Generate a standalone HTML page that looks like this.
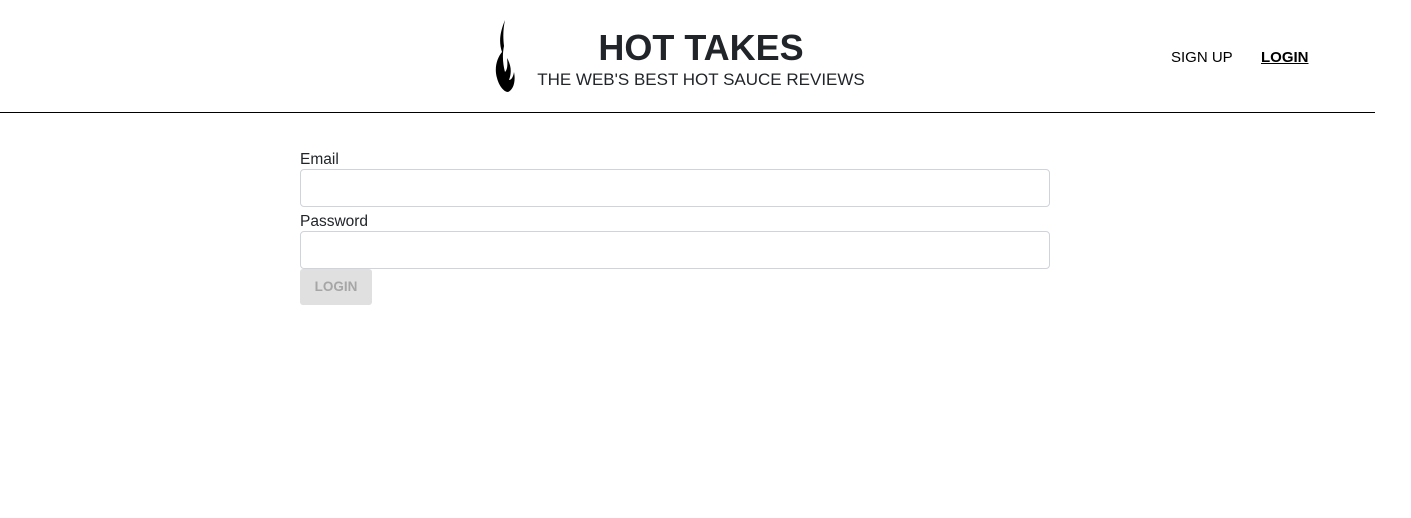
<!DOCTYPE html>
<html><head><style>
body{margin:0;background:#fff;font-family:"Liberation Sans",sans-serif;color:#212529;width:1411px;height:518px;overflow:hidden;position:relative}
.hdr{position:absolute;left:0;top:0;width:1375px;height:112px;border-bottom:1px solid #000}
.t1{position:absolute;left:500px;width:402px;text-align:center;top:27px;font-size:36px;font-weight:bold;color:#212529;white-space:nowrap}
.t2{position:absolute;left:500px;width:402px;text-align:center;top:70px;font-size:17px;color:#212529;white-space:nowrap}
.nav{position:absolute;top:49px;font-size:15px;color:#000}
label{position:absolute;left:300px;font-size:15.5px;color:#212529}
.in{position:absolute;left:300px;width:748px;height:36px;border:1px solid #ced4da;border-radius:4px}
.btn{position:absolute;left:300px;top:269px;width:72px;height:36px;background:#e0e0e0;border-radius:3px;color:#a6a6a6;font-size:13.5px;font-weight:bold;text-align:center;line-height:36px}
</style></head><body>
<div class="hdr">
<svg style="position:absolute;left:494px;top:20px" width="22" height="73" viewBox="0 0 22 73">
<path d="M11 0 C7 10 4 20 8 32 C3 38 0 48 3 58 C5 66 10 72 14 72 C19 70 22 62 20 52 C19 58 17 60 15 60 C18 52 17 45 13 38 C14 46 13 50 11 52 C9 44 8 36 10 26 C9 18 9 9 11 0Z" fill="#000"/>
</svg>
<div class="t1">HOT TAKES</div>
<div class="t2">THE WEB'S BEST HOT SAUCE REVIEWS</div>
<div class="nav" style="left:1171px">SIGN UP</div>
<div class="nav" style="left:1261px;font-weight:bold;text-decoration:underline">LOGIN</div>
</div>
<label style="top:151px">Email</label>
<div class="in" style="top:169px"></div>
<label style="top:213px">Password</label>
<div class="in" style="top:231px"></div>
<div class="btn">LOGIN</div>
</body></html>
